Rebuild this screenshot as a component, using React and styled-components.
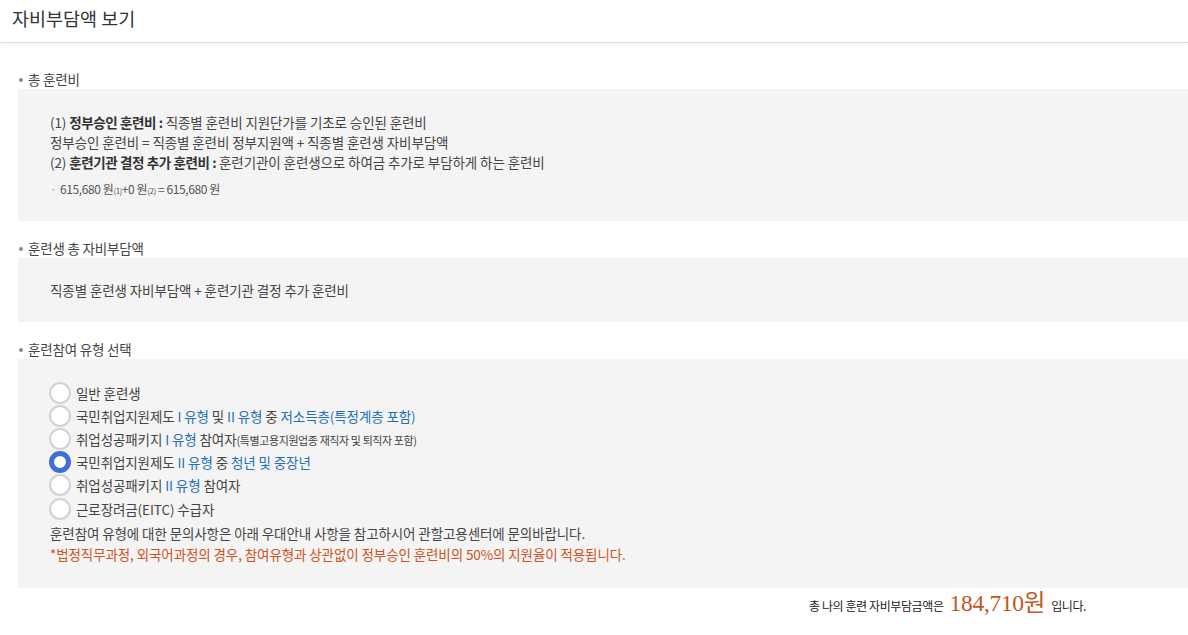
import React from "react";
import styled, { createGlobalStyle } from "styled-components";

const GlobalStyle = createGlobalStyle`
  body {
    margin: 0;
    background: #fff;
    font-family: "Noto Sans CJK KR", "Noto Sans", sans-serif;
    color: #444;
  }
`;

const options = [
  { label: [["일반 훈련생"]] },
  {
    label: [
      ["국민취업지원제도 "],
      ["I 유형", "blue"],
      [" 및 "],
      ["II 유형", "blue"],
      [" 중 "],
      ["저소득층(특정계층 포함)", "blue"],
    ],
  },
  {
    label: [
      ["취업성공패키지 "],
      ["I 유형", "blue"],
      [" 참여자"],
      ["(특별고용지원업종 재직자 및 퇴직자 포함)", "small"],
    ],
  },
  {
    label: [
      ["국민취업지원제도 "],
      ["II 유형", "blue"],
      [" 중 "],
      ["청년 및 중장년", "blue"],
    ],
    checked: true,
  },
  { label: [["취업성공패키지 "], ["II 유형", "blue"], [" 참여자"]] },
  { label: [["근로장려금(EITC) 수급자"]] },
];

const App = () => {
  return (
    <>
      <GlobalStyle />
      <Header>
        <Title>자비부담액 보기</Title>
      </Header>
      <Content>
        <SectionTitle>총 훈련비</SectionTitle>
        <Box $pad="23px 32px 22px">
          <Line>
            (1) <b>정부승인 훈련비 :</b> 직종별 훈련비 지원단가를 기초로 승인된 훈련비
          </Line>
          <Line>정부승인 훈련비 = 직종별 훈련비 정부지원액 + 직종별 훈련생 자비부담액</Line>
          <Line>
            (2) <b>훈련기관 결정 추가 훈련비 :</b> 훈련기관이 훈련생으로 하여금 추가로 부담하게 하는 훈련비
          </Line>
          <Formula>
            <Dot>·</Dot>615,680 원<Sub>(1)</Sub>+0 원<Sub>(2)</Sub> = 615,680 원
          </Formula>
        </Box>

        <SectionTitle>훈련생 총 자비부담액</SectionTitle>
        <Box $pad="22px 32px">
          <Line>직종별 훈련생 자비부담액 + 훈련기관 결정 추가 훈련비</Line>
        </Box>

        <SectionTitle>훈련참여 유형 선택</SectionTitle>
        <Box $pad="22px 32px 23px 31px">
          <RadioList>
            {options.map((opt, i) => (
              <RadioRow key={i}>
                <Radio $checked={opt.checked} />
                <span>
                  {opt.label.map(([text, kind], j) => (
                    <Part key={j} $kind={kind}>
                      {text}
                    </Part>
                  ))}
                </span>
              </RadioRow>
            ))}
          </RadioList>
          <Line $tight>훈련참여 유형에 대한 문의사항은 아래 우대안내 사항을 참고하시어 관할고용센터에 문의바랍니다.</Line>
          <Line $tight $note>
            *법정직무과정, 외국어과정의 경우, 참여유형과 상관없이 정부승인 훈련비의 50%의 지원율이 적용됩니다.
          </Line>
        </Box>

        <Total>
          <span>총 나의 훈련 자비부담금액은</span>
          <Amount>184,710원</Amount>
          <span>입니다.</span>
        </Total>
      </Content>
    </>
  );
};

export default App;

const Header = styled.div`
  height: 43px;
  box-sizing: border-box;
  padding: 5px 12px 0;
  border-bottom: 1px solid #dcdcdc;
  box-shadow: 0 2px 2px rgba(0, 0, 0, 0.03);
`;

const Title = styled.h1`
  margin: 0;
  font-size: 18.5px;
  font-weight: 400;
  letter-spacing: 0;
  color: #333;
  line-height: 26px;
`;

const Content = styled.div`
  padding: 26px 0 0 18px;
`;

const SectionTitle = styled.div`
  position: relative;
  padding-left: 10px;
  font-size: 13.5px;
  letter-spacing: -0.2px;
  line-height: 20px;
  color: #444;
  margin-top: 17px;
  &:first-child {
    margin-top: 0;
  }
  &::before {
    content: "";
    position: absolute;
    left: 1px;
    top: 9px;
    width: 4px;
    height: 4px;
    border-radius: 50%;
    background: #8a8a8a;
  }
`;

const Box = styled.div`
  background: #f4f4f4;
  padding: ${(p) => p.$pad};
`;

const Line = styled.div`
  font-size: 13.5px;
  letter-spacing: -0.1px;
  line-height: ${(p) => (p.$tight ? "21px" : "20px")};
  color: ${(p) => (p.$note ? "#d0521c" : "#444")};
  padding-left: ${(p) => (p.$tight ? "1px" : "0")};
  b {
    font-weight: 700;
    letter-spacing: -0.4px;
    color: #333;
  }
`;

const Formula = styled.div`
  margin-top: 9px;
  font-size: 12px;
  letter-spacing: -0.4px;
  line-height: 16px;
  color: #555;
`;

const Dot = styled.span`
  display: inline-block;
  width: 10px;
  color: #999;
`;

const Sub = styled.span`
  font-size: 8px;
  letter-spacing: -0.5px;
`;

const RadioList = styled.div`
  display: flex;
  flex-direction: column;
  margin-bottom: 3px;
`;

const RadioRow = styled.label`
  display: flex;
  align-items: center;
  gap: 5px;
  height: 23.2px;
  font-size: 13.5px;
  letter-spacing: -0.1px;
  color: #444;
`;

const Radio = styled.span`
  width: 22px;
  height: 22px;
  box-sizing: border-box;
  border-radius: 50%;
  background: #fff;
  flex-shrink: 0;
  border: ${(p) => (p.$checked ? "5px solid #3c6fdc" : "2px solid #d2d2d2")};
`;

const Part = styled.span`
  color: ${(p) => (p.$kind === "blue" ? "#2470b4" : "#444")};
  font-size: ${(p) => (p.$kind === "small" ? "11px" : "inherit")};
  letter-spacing: ${(p) => (p.$kind === "small" ? "-0.4px" : "inherit")};
`;

const Total = styled.div`
  display: flex;
  align-items: baseline;
  justify-content: flex-end;
  gap: 6px;
  padding-right: 102px;
  height: 30px;
  line-height: 30px;
  font-size: 12px;
  letter-spacing: -0.4px;
  color: #222;
`;

const Amount = styled.span`
  font-family: "Liberation Serif", "Noto Sans CJK KR", serif;
  font-size: 23.5px;
  color: #c4561f;
  letter-spacing: -0.3px;
`;
